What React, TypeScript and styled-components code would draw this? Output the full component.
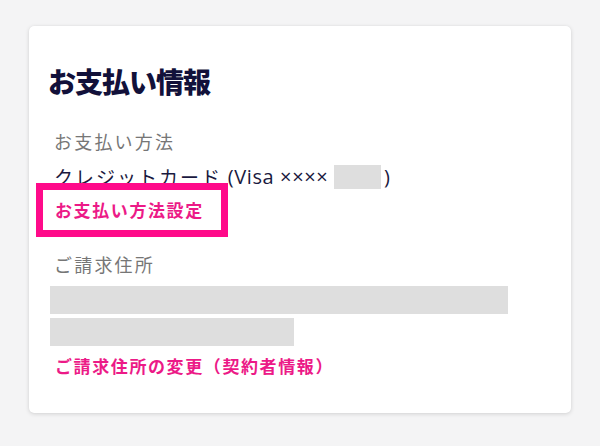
import React from "react";
import styled, { createGlobalStyle } from "styled-components";

const Global = createGlobalStyle`
  html, body { margin: 0; padding: 0; background: #f4f4f5; }
  body { font-family: "Noto Sans CJK JP", "Noto Sans", sans-serif; }
`;

const Page = styled.div`
  width: 600px;
  height: 446px;
  box-sizing: border-box;
  padding: 26px 29px 0 29px;
  background: #f4f4f5;
`;

const Card = styled.section`
  background: #fff;
  border-radius: 5px;
  box-shadow: 0 1px 4px rgba(0, 0, 0, 0.14), 0 0 1px rgba(0, 0, 0, 0.08);
  padding: 37px 21px 34px 19px;
  display: flex;
  flex-direction: column;
`;

const Title = styled.h2`
  margin: 0;
  font-size: 28px;
  line-height: 36px;
  font-weight: 900;
  letter-spacing: -1px;
  color: #12113a;
`;

const Label = styled.div<{ $mt: number }>`
  margin-top: ${(p) => p.$mt}px;
  font-size: 18px;
  line-height: 26px;
  letter-spacing: 2.2px;
  color: #767676;
  padding-left: 6px;
`;

const Value = styled.div`
  margin-top: 10px;
  font-size: 19px;
  line-height: 26px;
  letter-spacing: 2px;
  color: #1a1940;
  padding-left: 6px;
  display: flex;
  align-items: center;
`;

const Latin = styled.span`
  font-family: "Open Sans", "Noto Sans", sans-serif;
  font-size: 20px;
  letter-spacing: 0.6px;
  white-space: pre;
`;

const Masked = styled.span<{ $w: number; $h: number }>`
  display: inline-block;
  width: ${(p) => p.$w}px;
  height: ${(p) => p.$h}px;
  background: #dedede;
`;

const Card4 = styled(Masked)`
  margin: 0 3px 0 0;
`;

const Bars = styled.div`
  margin-top: 9px;
  padding-left: 2px;
  display: flex;
  flex-direction: column;
  gap: 4px;
`;

const LinkRow = styled.div<{ $mt: number }>`
  margin-top: ${(p) => p.$mt}px;
  padding-left: 7px;
`;

const Link = styled.a`
  position: relative;
  display: inline-block;
  font-size: 17px;
  line-height: 26px;
  font-weight: 700;
  letter-spacing: 1.6px;
  color: #ec1a87;
  text-decoration: none;
  cursor: pointer;
`;

const Highlight = styled.span`
  position: absolute;
  left: -19px;
  top: -14px;
  width: 178px;
  height: 40px;
  border: 7px solid #ff0a8a;
  pointer-events: none;
`;

export default function App() {
  return (
    <>
      <Global />
      <Page>
        <Card>
          <Title>お支払い情報</Title>
          <Label $mt={29}>お支払い方法</Label>
          <Value>
            クレジットカード
            <Latin>{" (Visa ×××× "}</Latin>
            <Card4 $w={47} $h={24} />
            <Latin>)</Latin>
          </Value>
          <LinkRow $mt={7}>
            <Link>
              お支払い方法設定
              <Highlight />
            </Link>
          </LinkRow>
          <Label $mt={28}>ご請求住所</Label>
          <Bars>
            <Masked $w={458} $h={28} />
            <Masked $w={244} $h={28} />
          </Bars>
          <LinkRow $mt={7}>
            <Link>ご請求住所の変更（契約者情報）</Link>
          </LinkRow>
        </Card>
      </Page>
    </>
  );
}
